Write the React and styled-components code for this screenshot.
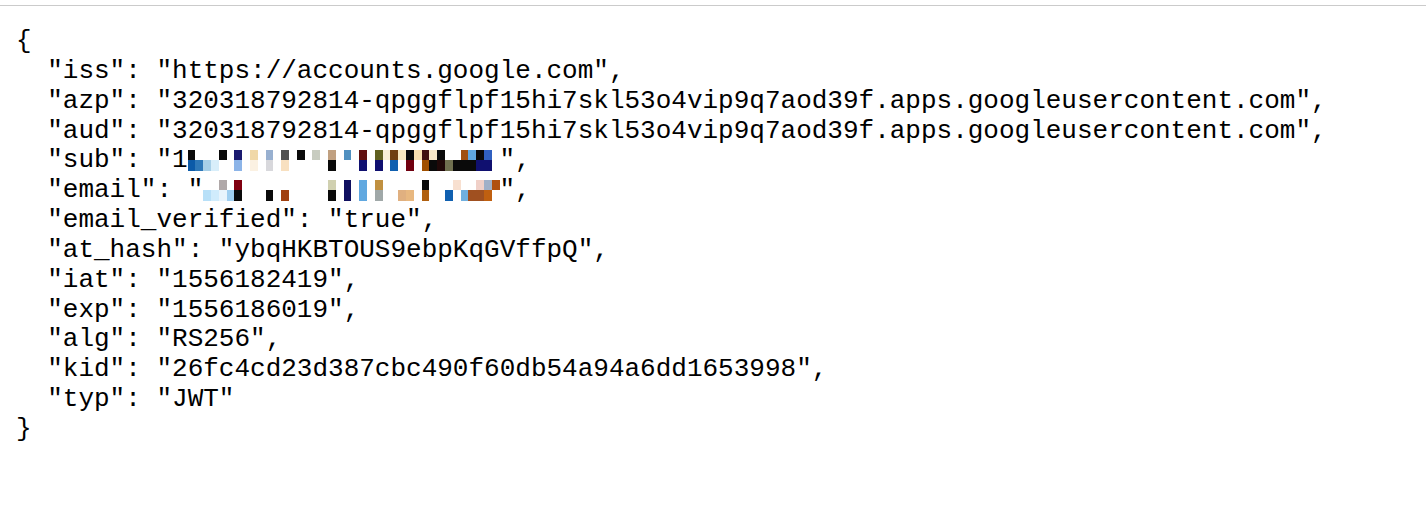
import React from "react";
import styled, { createGlobalStyle } from "styled-components";

const GlobalStyle = createGlobalStyle`
  html, body {
    margin: 0;
    padding: 0;
    background: #fff;
  }
`;

const Page = styled.div`
  width: 100%;
  min-height: 506px;
  padding-top: 5px;
  box-sizing: border-box;
`;

const Rule = styled.div`
  height: 1px;
  background: #cbcbcb;
`;

const Code = styled.div`
  padding: 21px 0 0 16px;
  font-family: "Liberation Mono", "Courier New", monospace;
  font-size: 26px;
  line-height: 29.85px;
  color: #000;
`;

const Line = styled.div`
  white-space: pre;
  height: 29.85px;
`;

const Mosaic = styled.span`
  display: inline-flex;
  vertical-align: top;
  height: 29.85px;
  align-items: center;
`;

const Column = styled.span`
  display: inline-flex;
  flex-direction: column;
  width: 7.8px;
  margin-top: -2px;
`;

const Cell = styled.span`
  display: block;
  height: 10.5px;
  background: ${(p) => p.$c || "transparent"};
`;

// each column: [top, bottom]
const subBlocks = [
  ["#0a0a0a", "#0b5aa8"], [null, "#2e78b8"], [null, "#a8d0e8"], [null, "#d8eefa"],
  ["#0a0a0a", null], [null, null], ["#1a1a70", "#8cb4e8"], [null, null],
  ["#f0d8a8", "#fbf1e2"], [null, null], ["#98b0d0", "#d8d8dc"], [null, null],
  ["#505050", "#f8e0c0"], [null, null], ["#0a0a0a", null], [null, null],
  ["#c8ccc0", null], [null, null], ["#c0a080", "#0a0a0a"], [null, null],
  ["#5090c0", null], [null, null], ["#601010", "#101070"], [null, null],
  ["#606020", "#101070"], ["#f8f0d8", null], ["#704010", "#1060b0"], ["#f8e8c0", null],
  ["#0a0a0a", "#700010"], ["#f8e0b0", null], ["#401010", "#a05000"], ["#f8e8c8", "#0a0a0a"],
  ["#0a0a0a", "#200808"], [null, "#707050"], [null, "#0a0a0a"], ["#a05010", "#0a0a0a"],
  ["#60a8e0", "#0a0a0a"], ["#0a0a0a", "#101070"], ["#3060c0", "#101070"], [null, null],
];

const emailBlocks = [
  [null, "#b8e0f8"], [null, "#d0ecfc"], ["#b0a8a8", "#e8f4fc"], [null, "#a0cff0"],
  ["#800010", "#0a0a0a"], [null, null], [null, null], [null, null],
  [null, "#0a0a0a"], [null, null], [null, "#a04010"], [null, null],
  [null, null], [null, null], [null, null], [null, null],
  ["#d0d0b0", "#0a0a0a"], [null, null], ["#101060", "#101060"], [null, null],
  ["#60a8e0", "#60a8e0"], [null, null], ["#c09040", "#a0a8a8"], [null, null],
  [null, null], [null, "#e0b080"], [null, "#e8b880"], [null, null],
  ["#0a0a0a", "#b06010"], [null, null], [null, null], [null, "#1060b0"],
  ["#f8e0d0", null], [null, "#70b0e0"], [null, "#a05020"], ["#f0d0c8", "#a05020"],
  ["#a0b0c8", "#c06010"], ["#b05010", null],
];

function Blur({ blocks }) {
  return (
    <Mosaic>
      {blocks.map(([top, bottom], i) => (
        <Column key={i}>
          <Cell $c={top} />
          <Cell $c={bottom} />
        </Column>
      ))}
    </Mosaic>
  );
}

const client =
  "320318792814-qpggflpf15hi7skl53o4vip9q7aod39f.apps.googleusercontent.com";

export default function App() {
  return (
    <Page>
      <GlobalStyle />
      <Rule />
      <Code>
        <Line>{"{"}</Line>
        <Line>{'  "iss": "https://accounts.google.com",'}</Line>
        <Line>{`  "azp": "${client}",`}</Line>
        <Line>{`  "aud": "${client}",`}</Line>
        <Line>
          {'  "sub": "1'}
          <Blur blocks={subBlocks} />
          {'",'}
        </Line>
        <Line>
          {'  "email": "'}
          <Blur blocks={emailBlocks} />
          {'",'}
        </Line>
        <Line>{'  "email_verified": "true",'}</Line>
        <Line>{'  "at_hash": "ybqHKBTOUS9ebpKqGVffpQ",'}</Line>
        <Line>{'  "iat": "1556182419",'}</Line>
        <Line>{'  "exp": "1556186019",'}</Line>
        <Line>{'  "alg": "RS256",'}</Line>
        <Line>{'  "kid": "26fc4cd23d387cbc490f60db54a94a6dd1653998",'}</Line>
        <Line>{'  "typ": "JWT"'}</Line>
        <Line>{"}"}</Line>
      </Code>
    </Page>
  );
}
